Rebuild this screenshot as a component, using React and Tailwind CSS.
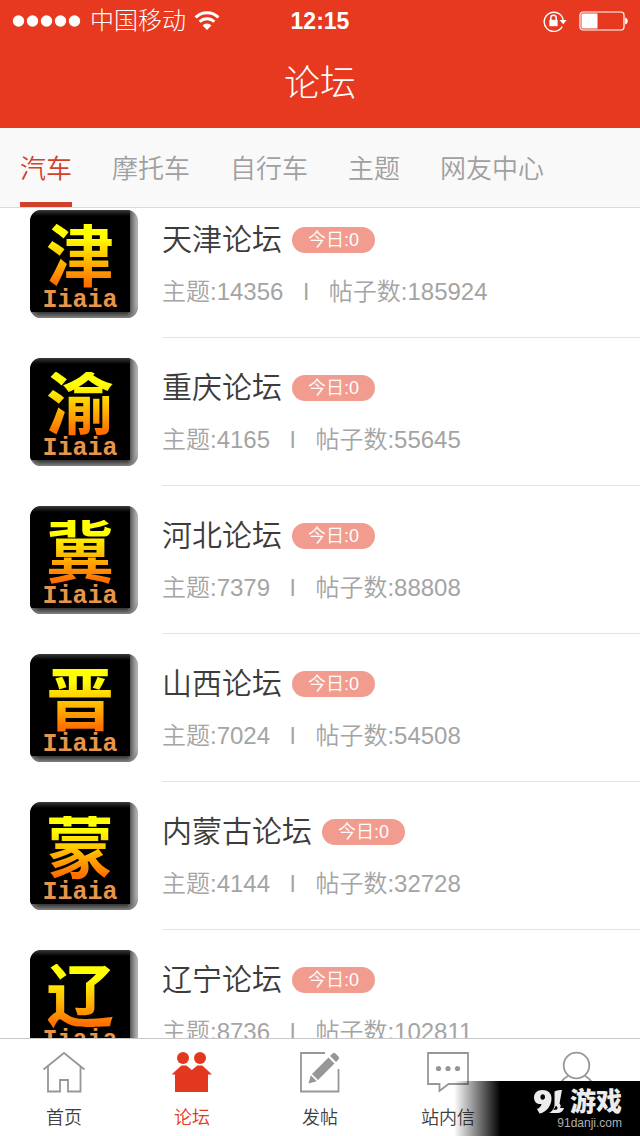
import React from "react";

const forums = [
  { glyph: "津", name: "天津论坛", topics: 14356, posts: 185924 },
  { glyph: "渝", name: "重庆论坛", topics: 4165, posts: 55645 },
  { glyph: "冀", name: "河北论坛", topics: 7379, posts: 88808 },
  { glyph: "晋", name: "山西论坛", topics: 7024, posts: 54508 },
  { glyph: "蒙", name: "内蒙古论坛", topics: 4144, posts: 32728 },
  { glyph: "辽", name: "辽宁论坛", topics: 8736, posts: 102811 },
];

const categories = ["汽车", "摩托车", "自行车", "主题", "网友中心"];

function StatusBar() {
  return (
    <div className="grid h-10 grid-cols-3 items-center px-3 text-2xl leading-[42px]">
      <div className="flex items-center gap-2">
        <svg className="shrink-0" width="70" height="14" viewBox="0 0 70 14" fill="currentColor" aria-hidden="true">
          <circle cx="6.500" cy="7" r="5.700" />
          <circle cx="20.500" cy="7" r="5.700" />
          <circle cx="34.500" cy="7" r="5.700" />
          <circle cx="48.500" cy="7" r="5.700" />
          <circle cx="62.500" cy="7" r="5.700" />
        </svg>
        <span className="whitespace-nowrap font-light">中国移动</span>
        <svg className="shrink-0" width="26" height="20" viewBox="0 0 26 20" fill="none" stroke="currentColor" aria-hidden="true">
          <path d="M1.6 6.4a16.2 16.2 0 0 1 22.800 0" strokeWidth="3" />
          <path d="M5.6 10.800a10.500 10.500 0 0 1 14.800 0" strokeWidth="2.8" />
          <path d="M13 19l-4.400-4.600a6.300 6.300 0 0 1 8.800 0z" fill="currentColor" stroke="none" />
        </svg>
      </div>
      <span className="text-center text-[23px] font-bold">12:15</span>
      <div className="flex items-center justify-end gap-3">
        <svg width="24" height="22" viewBox="0 0 24 22" fill="none" stroke="currentColor" aria-hidden="true">
          <path d="M19.2 16.5A9.6 9.6 0 1 1 20.2 10" strokeWidth="1.4" />
          <path d="M16.6 10h7l-3.4 4.2z" fill="currentColor" stroke="none" />
          <path d="M7.800 10V8a2.700 2.700 0 0 1 5.400 0v2" strokeWidth="1.500" />
          <path d="M6.400 9.800h8.200v6.400H6.400z" fill="currentColor" stroke="none" />
        </svg>
        <svg width="49" height="20" viewBox="0 0 49 20" aria-hidden="true">
          <rect x="1" y="1" width="44" height="18" rx="3" fill="none" stroke="currentColor" strokeWidth="1.2" />
          <rect x="2.500" y="2.500" width="16" height="15" rx="1" fill="currentColor" />
          <path d="M46.200 6.500c3.400 1 3.400 6 0 7z" fill="currentColor" />
        </svg>
      </div>
    </div>
  );
}

function ForumTile({ glyph }) {
  return (
    <div className="flex size-[108px] shrink-0 overflow-hidden rounded-[11px] bg-[linear-gradient(to_right,#303030_90%,#c4c4c4)] pb-[6px] pr-2 shadow-[inset_0_-4px_4px_-1px_#858585]">
      <div className="flex grow flex-col items-center rounded-tl-[10px] bg-[linear-gradient(to_bottom,#3a3a3a,#000000_6px)] pt-[14px]">
        <span className="bg-gradient-to-b from-[#ffff00] from-20% to-[#ff7000] to-90% bg-clip-text text-[68px] font-bold leading-[66px] text-transparent">
          {glyph}
        </span>
        <span className="font-['Liberation_Mono',monospace] text-[25px] font-bold leading-[22px] text-[#e8954a]">
          Iiaia
        </span>
      </div>
    </div>
  );
}

function ForumRow({ forum }) {
  return (
    <li>
      <a href="#forum" className="flex pl-[30px]">
        <div className="py-5">
          <ForumTile glyph={forum.glyph} />
        </div>
        <div className="ml-6 flex grow flex-col border-b border-[#e4e4e4] pt-7">
          <div className="flex items-center gap-[10px]">
            <h2 className="text-[30px] font-[350] leading-[44px] text-[#3c3c3c]">{forum.name}</h2>
            <span className="rounded-full bg-[#f19c8f] px-4 text-lg font-[350] leading-[26px] text-white">今日:0</span>
          </div>
          <div className="mt-3 flex gap-5 whitespace-nowrap text-2xl font-[350] leading-9 text-[#a4a4a4]">
            <span>主题:{forum.topics}</span>
            <span>l</span>
            <span>帖子数:{forum.posts}</span>
          </div>
        </div>
      </a>
    </li>
  );
}

const iconProps = { width: 44, height: 44, viewBox: "0 0 44 44", fill: "none", stroke: "#979797", strokeWidth: 1.8, "aria-hidden": true };

const HomeIcon = () => (
  <svg {...iconProps}>
    <path d="M1.5 18.5L22 2l20.5 16.5M6 15.500V40.500h12V29h8v11.500h12.500V15.500" />
  </svg>
);

const ForumIcon = () => (
  <svg {...iconProps} fill="#e33820" stroke="none">
    <circle cx="13" cy="7" r="6" />
    <circle cx="30" cy="7" r="6" />
    <path d="M1.500 23.500L11.500 14.500h5L21.800 19l5.500-4.500h5L42 23.500h-4V41H5V23.500z" />
  </svg>
);

const PostIcon = () => (
  <svg {...iconProps}>
    <path d="M27 2H3v38.500h37.500V18" />
    <path d="M30.500 6.500l6 6L20 29l-6-6zM32 5l2.500-2.500q1.500-1.500 3 0l3 3q1.500 1.500 0 3L38 11zM12.800 24.300l6 6-8.300 2.200z" fill="#979797" stroke="none" />
  </svg>
);

const MessageIcon = () => (
  <svg {...iconProps}>
    <path d="M2 2h40v31H22.500l-9 7V33H2z" />
    <g fill="#979797" stroke="none">
      <circle cx="12.500" cy="17.500" r="2.600" />
      <circle cx="22" cy="17.500" r="2.600" />
      <circle cx="31.500" cy="17.500" r="2.600" />
    </g>
  </svg>
);

const ProfileIcon = () => (
  <svg {...iconProps}>
    <circle cx="22.500" cy="14.500" r="12.800" />
    <path d="M14 25c-6 3-9 8-9.500 15h36c-.500-7-3.500-12-9.500-15" />
  </svg>
);

function NavItem({ icon, label, active }) {
  return (
    <button type="button" aria-label={label || "个人"} className="flex flex-col items-center pt-3">
      {icon}
      <span className={active ? "mt-2 text-lg leading-[30px] text-[#e33820]" : "mt-2 text-lg leading-[30px] text-[#404040]"}>
        {label}
      </span>
    </button>
  );
}

function Watermark() {
  return (
    <div className="absolute bottom-0 right-0 flex h-[55px] w-[186px] flex-col items-end bg-gradient-to-r from-transparent to-black to-25% pr-[18px] pt-2 text-[#ececec]">
      <div className="flex items-center gap-[6px]">
        <svg width="30" height="26" viewBox="0 0 30 26" aria-hidden="true">
          <path
            fillRule="evenodd"
            fill="currentColor"
            d="M8.500 1C3 1 0 4.500 0 8.500c0 4.800 3.500 7 7.500 6.500-.5 2.500-2 4-4.500 5l2.500 4.500C12 23.500 17.500 17 17.500 9.500 17.500 4 14 1 8.500 1zm.3 4.200c2.800 0 3 5 .3 5.500-3.500.4-3.500-5.500-.3-5.500z"
          />
          <path
            fillRule="evenodd"
            fill="currentColor"
            d="M20.500 2.500q2.500-2 7.500-1.500l-2.500 13.500c1.500 1.500 1.500 3 .5 4.500h4c-1 3.500-3 5-6.500 5H15c4-2 5.500-5 5.500-9zm1.500 14l-2.500 4.500q4.500 0 4-2.500z"
          />
        </svg>
        <span className="text-[26px] font-black leading-6">游戏</span>
      </div>
      <span className="font-['Liberation_Sans',sans-serif] text-xs leading-4 text-[#b0b0b0]">91danji.com</span>
    </div>
  );
}

export default function App() {
  return (
    <div className="flex h-screen flex-col overflow-hidden bg-white font-['Liberation_Sans','Noto_Sans_CJK_SC',sans-serif]">
      <header className="shrink-0 bg-[#e73820] text-white">
        <StatusBar />
        <h1 className="text-center text-4xl font-light leading-[88px]">论坛</h1>
      </header>
      <nav className="flex h-20 shrink-0 gap-10 border-b border-[#dcdcdc] bg-[#f9f9f9] px-5 text-[26px] font-[350]">
        {categories.map((name, i) => (
          <a
            key={name}
            href="#category"
            className={
              i === 0
                ? "whitespace-nowrap border-b-[5px] border-[#d2412a] leading-[82px] text-[#d2412a]"
                : "whitespace-nowrap leading-[82px] text-[#a0a0a0]"
            }
          >
            {name}
          </a>
        ))}
      </nav>
      <main className="min-h-0 grow overflow-hidden">
        <ul className="-mt-[18px]">
          {forums.map((forum) => (
            <ForumRow key={forum.name} forum={forum} />
          ))}
        </ul>
      </main>
      <footer className="relative grid h-[98px] shrink-0 grid-cols-5 border-t border-[#c8c8c8] bg-white font-[350]">
        <NavItem icon={<HomeIcon />} label="首页" />
        <NavItem icon={<ForumIcon />} label="论坛" active />
        <NavItem icon={<PostIcon />} label="发帖" />
        <NavItem icon={<MessageIcon />} label="站内信" />
        <NavItem icon={<ProfileIcon />} />
        <Watermark />
      </footer>
    </div>
  );
}
